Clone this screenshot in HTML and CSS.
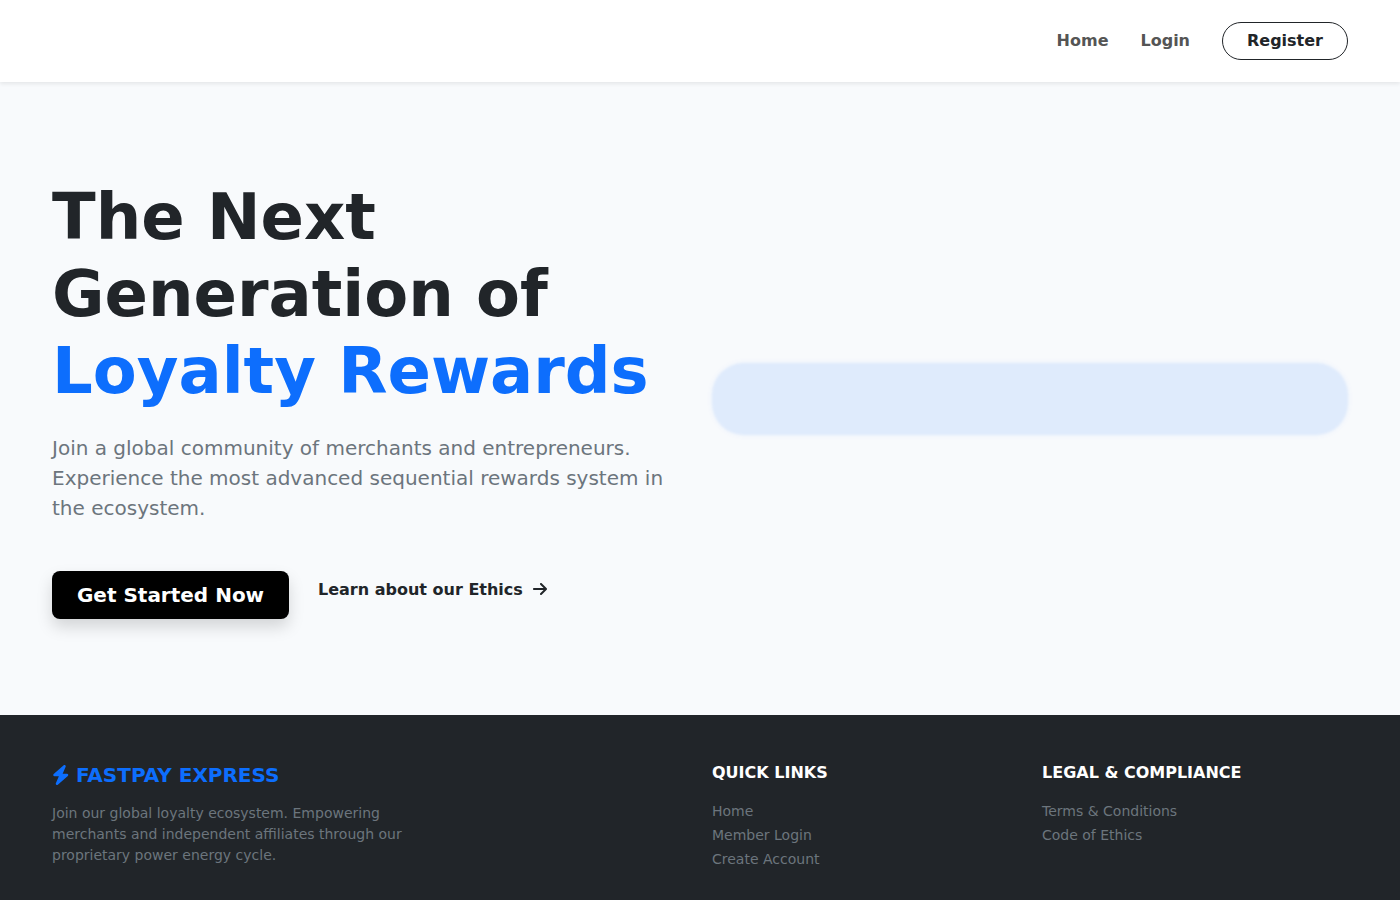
FILE: index.html
```html
<!DOCTYPE html>
<html lang="en">
<head>
    <meta charset="UTF-8">
    <meta name="viewport" content="width=device-width, initial-scale=1.0">
    <title>FastPay Express</title>
    <link rel="stylesheet" href="styles.css">
</head>
<body>
    <nav class="navbar">
        <a class="nav-link" href="#">Home</a>
        <a class="nav-link" href="#">Login</a>
        <a class="nav-register" href="#">Register</a>
    </nav>

    <section class="hero">
        <div class="hero-text">
            <h1 class="hero-title">The Next Generation of <span class="hero-accent">Loyalty Rewards</span></h1>
            <p class="hero-lead">Join a global community of merchants and entrepreneurs. Experience the most advanced sequential rewards system in the ecosystem.</p>
            <div class="hero-actions">
                <a class="btn-start" href="#">Get Started Now</a>
                <a class="link-ethics" href="#">Learn about our Ethics
                    <svg class="arrow" viewBox="0 0 448 512" aria-hidden="true">
                        <path d="M438.6 278.6c12.5-12.5 12.5-32.8 0-45.3l-160-160c-12.5-12.5-32.8-12.5-45.3 0s-12.5 32.8 0 45.3L338.8 224 32 224c-17.7 0-32 14.3-32 32s14.3 32 32 32l306.7 0L233.4 393.4c-12.5 12.5-12.5 32.8 0 45.3s32.8 12.5 45.3 0l160-160z" fill="currentColor"/>
                    </svg>
                </a>
            </div>
        </div>
        <div class="hero-media">
            <div class="hero-placeholder"></div>
        </div>
    </section>

    <footer class="footer">
        <div class="footer-brand">
            <div class="brand-name">
                <svg class="bolt" viewBox="0 0 448 512" aria-hidden="true">
                    <path d="M349.4 44.6c5.9-13.7 1.5-29.7-10.6-38.5s-28.6-8-39.9 1.8l-256 224c-10 8.8-13.6 22.9-8.9 35.3S50.7 288 64 288H175.5L98.6 467.4c-5.9 13.7-1.5 29.7 10.6 38.5s28.6 8 39.9-1.8l256-224c10-8.8 13.5-22.9 8.9-35.3s-16.6-20.4-30-20.4H272.5L349.4 44.6z" fill="currentColor"/>
                </svg>
                FASTPAY EXPRESS
            </div>
            <p class="brand-text">Join our global loyalty ecosystem. Empowering merchants and independent affiliates through our proprietary power energy cycle.</p>
        </div>
        <div class="footer-col">
            <h3 class="footer-heading">QUICK LINKS</h3>
            <a class="footer-link" href="#">Home</a>
            <a class="footer-link" href="#">Member Login</a>
            <a class="footer-link" href="#">Create Account</a>
        </div>
        <div class="footer-col">
            <h3 class="footer-heading">LEGAL &amp; COMPLIANCE</h3>
            <a class="footer-link" href="#">Terms &amp; Conditions</a>
            <a class="footer-link" href="#">Code of Ethics</a>
        </div>
    </footer>
</body>
</html>
```

FILE: styles.css
```css
* {
    box-sizing: border-box;
}

body {
    font-family: 'DejaVu Sans', sans-serif;
    background-color: #f8fafc;
    color: #212529;
    margin: 0;
    height: 900px;
    overflow: hidden;
    display: flex;
    flex-direction: column;
}

a {
    text-decoration: none;
}

.navbar {
    position: relative;
    height: 82px;
    padding: 0 52px 2px 0;
    background-color: #fff;
    box-shadow: 0 2px 4px rgba(0, 0, 0, 0.08);
    display: flex;
    justify-content: flex-end;
    align-items: center;
    gap: 32px;
}

.nav-link {
    font-size: 16px;
    font-weight: 700;
    color: #555;
}

.nav-register {
    width: 126px;
    height: 38px;
    margin-top: 2px;
    padding-bottom: 2px;
    border: 1px solid #212529;
    border-radius: 19px;
    font-size: 16px;
    font-weight: 700;
    color: #212529;
    display: flex;
    justify-content: center;
    align-items: center;
}

.hero {
    height: 633px;
    padding: 1px 52px 0;
    display: grid;
    grid-template-columns: 1fr 636px;
    column-gap: 24px;
    align-items: center;
}

.hero-title {
    font-size: 64px;
    font-weight: 700;
    line-height: 77px;
    margin: 0 0 23px;
    color: #212529;
}

.hero-accent {
    color: #0d6efd;
    display: block;
}

.hero-lead {
    font-size: 20px;
    line-height: 30px;
    color: #6c757d;
    margin: 0 0 48px;
}

.hero-actions {
    display: flex;
    align-items: flex-start;
    gap: 29px;
}

.btn-start {
    width: 237px;
    height: 48px;
    background-color: #000;
    color: #fff;
    border-radius: 8px;
    font-size: 20px;
    font-weight: 700;
    box-shadow: 0 8px 16px rgba(0, 0, 0, 0.15);
    display: flex;
    justify-content: center;
    align-items: center;
}

.link-ethics {
    font-size: 16px;
    font-weight: 700;
    color: #212529;
    margin-top: 9px;
    display: flex;
    align-items: center;
    gap: 10px;
}

.arrow {
    width: 14px;
    height: 16px;
    margin-bottom: 2px;
}

.hero-placeholder {
    height: 72px;
    background-color: rgba(13, 110, 253, 0.1);
    border-radius: 32px;
    filter: blur(1px);
    box-shadow: 0 0 6px rgba(13, 110, 253, 0.06);
}

.footer {
    flex: 1;
    background-color: #212529;
    padding: 48px 52px 0;
    display: grid;
    grid-template-columns: 636px 306px 1fr;
    column-gap: 24px;
}

.brand-name {
    font-size: 20px;
    font-weight: 700;
    color: #0d6efd;
    line-height: 24px;
    display: flex;
    align-items: center;
    gap: 6.5px;
    margin-bottom: 16px;
}

.bolt {
    width: 17.5px;
    height: 20px;
}

.brand-text {
    font-size: 14px;
    line-height: 21px;
    color: #6c757d;
    margin: 0;
    max-width: 360px;
}

.footer-col {
    display: flex;
    flex-direction: column;
    align-items: flex-start;
}

.footer-heading {
    font-size: 16px;
    font-weight: 700;
    line-height: 19px;
    color: #fff;
    margin: 0 0 17px;
}

.footer-link {
    font-size: 14px;
    line-height: 24px;
    color: #6c757d;
}
```
